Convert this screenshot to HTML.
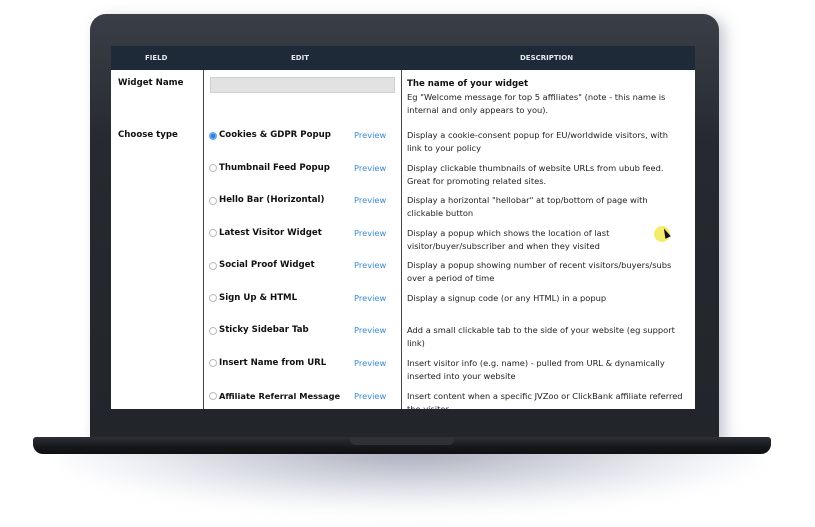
<!DOCTYPE html>
<html><head><style>
*{margin:0;padding:0;box-sizing:border-box}
body{width:815px;height:527px;background:#fff;position:relative;overflow:hidden;font-family:"DejaVu Sans","Liberation Sans",sans-serif}
.shadow{position:absolute;left:60px;top:440px;width:700px;height:70px;background:radial-gradient(ellipse at 50% 15%,rgba(110,115,140,.6),rgba(190,195,215,.3) 55%,rgba(255,255,255,0) 75%);filter:blur(8px)}
.lid{position:absolute;left:90px;top:14px;width:629px;height:426px;background:linear-gradient(180deg,#3a3f47,#262a30 30%,#22262b);border-radius:16px 16px 0 0;box-shadow:6px 4px 14px rgba(140,145,165,.5)}
.base{position:absolute;left:33px;top:437px;width:738px;height:17px;background:linear-gradient(180deg,#2c3036,#15171a 60%,#0f1012);border-radius:3px 3px 10px 10px}
.notch{position:absolute;left:350px;top:437px;width:104px;height:8px;background:#2e3237;border-radius:0 0 5px 5px}
.screen{position:absolute;left:111px;top:46px;width:584px;height:363px;background:#fff;overflow:hidden}
.hdr{position:absolute;left:0;top:0;width:584px;height:24px;background:#1f2a38;color:#e6e8ec;font-size:7px;font-weight:bold}
.hdr span{position:absolute;top:8px}
.vl{position:absolute;top:24px;width:1px;height:340px;background:#444}
.t{position:absolute;font-size:8.3px;color:#222;white-space:nowrap;line-height:13px}
.b{font-weight:bold;color:#111;font-size:8.6px}
.p{color:#3a8ad4}
.r{position:absolute;width:8px;height:8px;border-radius:50%;border:1px solid #bbb;background:#fff}
</style></head><body>
<div class="shadow"></div>
<div class="lid"></div>
<div class="base"></div>
<div class="notch"></div>
<div class="screen">
<div class="hdr"><span style="left:34px">FIELD</span><span style="left:180px">EDIT</span><span style="left:409px">DESCRIPTION</span></div>
<div class="vl" style="left:92px"></div>
<div class="vl" style="left:290px"></div>
<div class="t b" style="left:7px;top:31px">Widget Name</div>
<div style="position:absolute;left:99px;top:31px;width:185px;height:16px;background:#e2e2e2;border:1px solid #d0d0d0"></div>
<div class="t" style="left:296px;top:31px"><span class="b">The name of your widget</span><br>Eg "Welcome message for top 5 affiliates" (note - this name is<br>internal and only appears to you).</div>
<div class="t b" style="left:7px;top:83px">Choose type</div>

<div class="r" style="left:98px;top:86px;background:#2f7fd6;border:2px solid #6aa8ee"></div>
<div class="t b" style="left:108px;top:83px">Cookies &amp; GDPR Popup</div><div class="t p" style="left:243px;top:83px">Preview</div>
<div class="t" style="left:296px;top:83px">Display a cookie-consent popup for EU/worldwide visitors, with<br>link to your policy</div>

<div class="r" style="left:98px;top:118px"></div>
<div class="t b" style="left:108px;top:116px">Thumbnail Feed Popup</div><div class="t p" style="left:243px;top:116px">Preview</div>
<div class="t" style="left:296px;top:116px">Display clickable thumbnails of website URLs from ubub feed.<br>Great for promoting related sites.</div>

<div class="r" style="left:98px;top:151px"></div>
<div class="t b" style="left:108px;top:148px">Hello Bar (Horizontal)</div><div class="t p" style="left:243px;top:148px">Preview</div>
<div class="t" style="left:296px;top:148px">Display a horizontal "hellobar" at top/bottom of page with<br>clickable button</div>

<div class="r" style="left:98px;top:183px"></div>
<div class="t b" style="left:108px;top:181px">Latest Visitor Widget</div><div class="t p" style="left:243px;top:181px">Preview</div>
<div class="t" style="left:296px;top:181px">Display a popup which shows the location of last<br>visitor/buyer/subscriber and when they visited</div>

<div class="r" style="left:98px;top:216px"></div>
<div class="t b" style="left:108px;top:213px">Social Proof Widget</div><div class="t p" style="left:243px;top:213px">Preview</div>
<div class="t" style="left:296px;top:213px">Display a popup showing number of recent visitors/buyers/subs<br>over a period of time</div>

<div class="r" style="left:98px;top:248px"></div>
<div class="t b" style="left:108px;top:246px">Sign Up &amp; HTML</div><div class="t p" style="left:243px;top:246px">Preview</div>
<div class="t" style="left:296px;top:246px">Display a signup code (or any HTML) in a popup</div>

<div class="r" style="left:98px;top:281px"></div>
<div class="t b" style="left:108px;top:278px">Sticky Sidebar Tab</div><div class="t p" style="left:243px;top:278px">Preview</div>
<div class="t" style="left:296px;top:278px">Add a small clickable tab to the side of your website (eg support<br>link)</div>

<div class="r" style="left:98px;top:313px"></div>
<div class="t b" style="left:108px;top:311px">Insert Name from URL</div><div class="t p" style="left:243px;top:311px">Preview</div>
<div class="t" style="left:296px;top:311px">Insert visitor info (e.g. name) - pulled from URL &amp; dynamically<br>inserted into your website</div>

<div class="r" style="left:98px;top:346px"></div>
<div class="t b" style="left:108px;top:344px;font-size:8.3px">Affiliate Referral Message</div><div class="t p" style="left:243px;top:344px">Preview</div>
<div class="t" style="left:296px;top:344px">Insert content when a specific JVZoo or ClickBank affiliate referred<br>the visitor</div>
</div>
<div style="position:absolute;left:654px;top:226px;width:16px;height:16px;border-radius:50%;background:rgba(240,230,60,.75)"></div>
<div style="position:absolute;left:663px;top:228px;width:0;height:0;border-left:3px solid transparent;border-right:3px solid transparent;border-bottom:10px solid #111;transform:rotate(-25deg)"></div>
</body></html>
